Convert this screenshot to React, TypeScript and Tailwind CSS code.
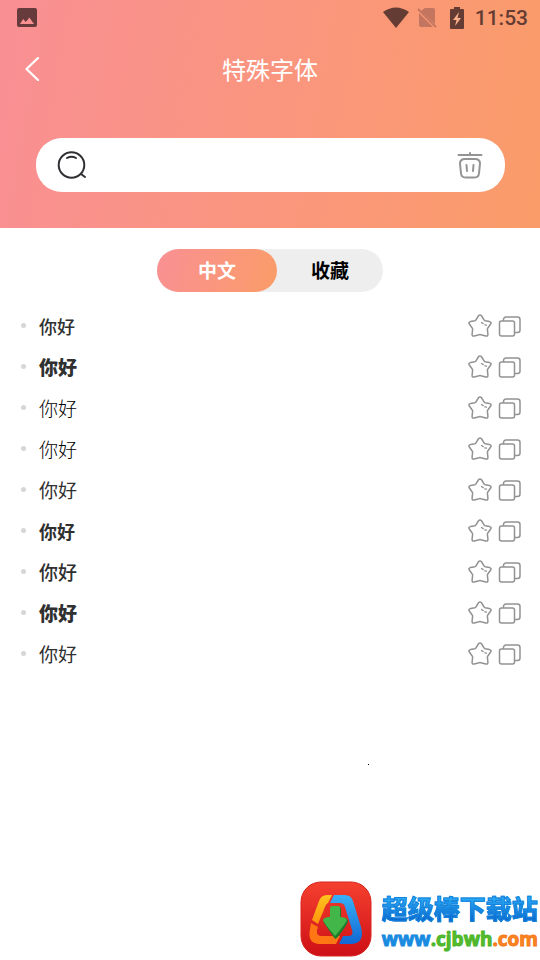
import React, { useState } from "react";

const cjk = "font-['Noto_Sans_CJK_SC',sans-serif]";

const samples: { id: number; style: string }[] = [
  { id: 1, style: "text-[18px] font-medium" },
  { id: 2, style: "text-[19px] font-black" },
  { id: 3, style: "text-[19px] font-light text-black" },
  { id: 4, style: "text-[19px] font-light text-black" },
  { id: 5, style: "text-[19px] font-normal" },
  { id: 6, style: "text-[18px] font-bold" },
  { id: 7, style: "text-[19px] font-medium" },
  { id: 8, style: "text-[19px] font-black" },
  { id: 9, style: "text-[19px] font-normal" },
];

function StatusBar() {
  return (
    <div className="flex h-9 items-center pl-4 pr-3 text-[#643c33]">
      <svg className="size-[22px]" viewBox="0 0 22 22" aria-hidden="true">
        <path
          fill="#673a3b"
          fillRule="evenodd"
          d="M3 1h16a2 2 0 0 1 2 2v15a2 2 0 0 1-2 2H3a2 2 0 0 1-2-2V3a2 2 0 0 1 2-2ZM4 17h14l-4.600-6.500-3.600 4.500-2.600-3Z"
        />
      </svg>
      <div className="ml-auto flex items-center">
        <svg className="h-[22px] w-[26px]" viewBox="0 0 26 22" aria-hidden="true">
          <path fill="currentColor" d="M0 5Q13-4 26 5L13 21Z" />
        </svg>
        <svg className="ml-2 h-[22px] w-5" viewBox="0 0 20 22" aria-hidden="true">
          <path fill="#c3755f" d="M8 1h8a2 2 0 0 1 2 2v14L4 4ZM2 6l14 14H4a2 2 0 0 1-2-2Z" />
          <path stroke="#c3755f" strokeWidth="1.800" d="M1 2l18 18" />
        </svg>
        <svg className="ml-3 h-[22px] w-4" viewBox="0 0 16 22" aria-hidden="true">
          <path fill="currentColor" d="M5 0h6v2h3a1 1 0 0 1 1 1v18a1 1 0 0 1-1 1H2a1 1 0 0 1-1-1V3a1 1 0 0 1 1-1h3Z" />
          <path fill="#fbb08c" d="M10 5L4 13h3.500L6 19l6-8H8.500Z" />
        </svg>
        <span className="ml-[10px] font-['Roboto',sans-serif] text-[21px] font-medium leading-6">11:53</span>
      </div>
    </div>
  );
}

function SearchIcon() {
  return (
    <svg className="size-8 shrink-0" viewBox="0 0 32 32" fill="none" stroke="#303034" strokeWidth="2" strokeLinecap="round" aria-hidden="true">
      <circle cx="15.500" cy="16" r="12.800" />
      <path d="M11 9q4.500-2.600 9 0M25 25l4 3" />
    </svg>
  );
}

function TrashIcon() {
  return (
    <svg className="h-7 w-[26px]" viewBox="0 0 26 28" fill="none" stroke="#949494" strokeWidth="2" strokeLinecap="round" strokeLinejoin="round" aria-hidden="true">
      <path d="M1.500 4h23M13 2v2M8 8h10q5 0 5 4.500l-1 10q-.500 4-4.500 4h-9q-4 0-4.500-4l-1-10Q3 8 8 8ZM9.500 14l.500 6M16.500 14l-.500 6" />
    </svg>
  );
}

function StarIcon() {
  return (
    <svg className="size-6" viewBox="0 0 24 24" fill="none" stroke="#929292" strokeWidth="1.500" strokeLinecap="round" strokeLinejoin="round" aria-hidden="true">
      <path d="M10.300 2Q12 .200 13.700 2L16 5.800q.400.700 1.200.900l4.300.900q2.500.700 1 2.700l-2.700 3.700q-.500.600-.400 1.400l.500 4.800q.100 2.400-2.100 1.700L12.900 20.800q-.900-.400-1.800 0L6.200 21.900q-2.200.700-2.100-1.700l.500-4.800q.100-.800-.400-1.400L1.500 10.300q-1.500-2 1-2.700l4.300-.900Q7.600 6.500 8 5.800Z" />
      <path strokeWidth="1.300" d="M13.500 8.500l1.700 1.100M16.800 10.800l1.700.3" />
    </svg>
  );
}

function CopyIcon() {
  return (
    <svg className="size-6" viewBox="0 0 24 24" fill="none" stroke="#929292" strokeWidth="1.500" strokeLinejoin="round" aria-hidden="true">
      <rect x="1.500" y="7" width="15" height="15" rx="2" />
      <path d="M5.500 7V5.500a2.500 2.500 0 0 1 2.500-2.500h11.500A2.500 2.500 0 0 1 22 5.500v10.500a2.500 2.500 0 0 1-2.500 2.500h-3" />
    </svg>
  );
}

function SiteLogo() {
  return (
    <svg className="h-[76px] w-[72px] shrink-0" viewBox="0 0 72 76" aria-hidden="true">
      <defs>
        <linearGradient id="logoRed" x1="0" y1="0" x2="0" y2="1">
          <stop offset="0" stopColor="#f5402f" />
          <stop offset="1" stopColor="#cd1016" />
        </linearGradient>
        <linearGradient id="logoYellow" x1="0" y1="0" x2="0" y2="1">
          <stop offset="0" stopColor="#ffc51c" />
          <stop offset="1" stopColor="#ff9310" />
        </linearGradient>
        <linearGradient id="logoBlue" x1="0" y1="0" x2="0" y2="1">
          <stop offset="0" stopColor="#38b1f7" />
          <stop offset="1" stopColor="#1267d3" />
        </linearGradient>
      </defs>
      <rect x="1" y="1" width="70" height="74" rx="20" fill="url(#logoRed)" stroke="#d7251e" />
      <path fill="url(#logoYellow)" d="M27 14h5l-4 8q-2 1-3 4l-7 17-6-4 7-19q2-6 8-6Z" />
      <path fill="url(#logoBlue)" d="M34 14h11q6 0 8 6l8 26q4 16-9 17H39l4-8h5q6 0 4-6l-7-23q-1-4-5-4H30Z" />
      <path fill="#ff7614" d="M11 42l7 4-1 3q-1 6 5 6h18l-4 8H19q-12-1-9-15Z" />
      <path fill="#1d7f2c" d="M33 26h6q2 0 2 2v9q6-1 7 3 0 3-11 17l-2 1-11-16q-2-4 2-5l5-1v-7q0-2 2-3Z" />
      <path fill="#43b649" d="M32 25h6q2 0 2 2v9q6 0 7 3-1 3-12 16-11-13-12-16 1-3 7-3v-9q0-2 2-2Z" />
    </svg>
  );
}

function Watermark() {
  return (
    <div className="absolute bottom-0 right-0 flex h-[79px] items-start pr-[2px]">
      <SiteLogo />
      <div className={`${cjk} ml-[10px] mt-[9px] whitespace-nowrap font-bold`}>
        <div className="bg-linear-to-b from-[#28a8f5] from-25% to-[#0b63cb] to-90% bg-clip-text text-[26px] leading-9 text-transparent [-webkit-text-stroke:1px_#1583dc]">
          超级棒下载站
        </div>
        <a href="#" className="block font-['Open_Sans',sans-serif] text-[19px] leading-[26px]">
          <span className="text-[#188be0] [-webkit-text-stroke:1px_#188be0]">www</span>
          <span className="text-[#55bc2c] [-webkit-text-stroke:1px_#4bb42b]">.cjbwh</span>
          <span className="text-[#fb8422] [-webkit-text-stroke:1px_#f57a1b]">.com</span>
        </a>
      </div>
    </div>
  );
}

export default function App() {
  const [tab, setTab] = useState("zh");
  const [text, setText] = useState("");
  const active = "rounded-full bg-linear-[105deg] from-[#f99094] to-[#fa9c68] text-white";

  return (
    <div className={`${cjk} relative min-h-screen overflow-hidden bg-white text-[#303030]`}>
      <header className="bg-linear-[100deg] from-[#f98f94] to-[#fa9c69] pb-9">
        <StatusBar />
        <div className="grid h-[66px] grid-cols-[64px_1fr_64px] items-center">
          <button type="button" aria-label="返回" className="flex h-12 items-center pl-6">
            <svg className="h-6 w-4" viewBox="0 0 16 24" fill="none" stroke="white" strokeWidth="2.200" strokeLinecap="round" strokeLinejoin="round">
              <path d="M14 1L2.500 12 14 23" />
            </svg>
          </button>
          <h1 className="text-center text-[24px] font-normal leading-8 text-white">特殊字体</h1>
        </div>
        <div className="ml-9 mr-[35px] mt-9 flex h-[54px] items-center rounded-[26px] bg-white pl-5 pr-[22px]">
          <SearchIcon />
          <input
            aria-label="输入文字"
            value={text}
            onChange={(e) => setText(e.target.value)}
            className="mx-3 min-w-0 flex-1 bg-transparent text-lg outline-none"
          />
          <button type="button" aria-label="清空" onClick={() => setText("")}>
            <TrashIcon />
          </button>
        </div>
      </header>

      <main>
        <div className="mx-auto mt-[21px] flex h-[43px] w-[226px] rounded-full bg-[#eeeeee] text-[19px] font-bold text-black">
          <button type="button" onClick={() => setTab("zh")} className={`w-[120px] ${tab === "zh" ? active : ""}`}>
            中文
          </button>
          <button type="button" onClick={() => setTab("fav")} className={`flex-1 ${tab === "fav" ? active : ""}`}>
            收藏
          </button>
        </div>

        <ul className="mt-[13px] pl-[21px] pr-[18px]">
          {samples.map((s) => (
            <li key={s.id} className="flex h-[41px] items-center">
              <span className="size-[5px] rounded-full bg-[#d6d6d6]" />
              <span className={`ml-[13px] flex-1 leading-6 ${s.style}`}>你好</span>
              <button type="button" aria-label="收藏">
                <StarIcon />
              </button>
              <button type="button" aria-label="复制" className="ml-[6px]">
                <CopyIcon />
              </button>
            </li>
          ))}
        </ul>
      </main>

      <span className="absolute left-[368px] top-[764px] size-px bg-black" />
      <Watermark />
    </div>
  );
}
